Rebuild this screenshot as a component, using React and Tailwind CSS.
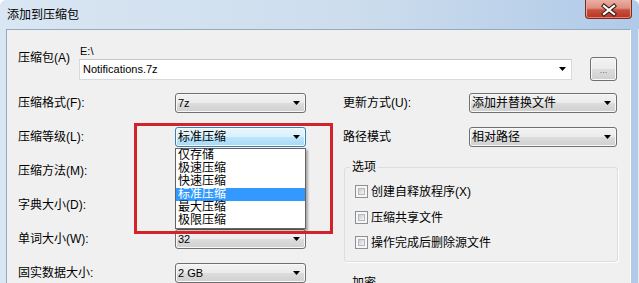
import React from "react";

const Arrow = () => (
  <svg width="7" height="4" viewBox="0 0 7 4" className="shrink-0">
    <path d="M0 0H7L3.5 4Z" fill="#000" />
  </svg>
);

const normalBg =
  "border-[#707070] bg-[linear-gradient(180deg,#f2f2f2_0%,#ebebeb_50%,#dddddd_50%,#cfcfcf_100%)] shadow-[inset_0_0_0_1px_#f8f8f8]";
const focusBg =
  "border-[#3c7fb1] bg-[linear-gradient(180deg,#eaf6fd_0%,#d9f0fc_50%,#bee6fd_50%,#a7d9f5_100%)] shadow-[inset_0_0_0_1px_#f4fbff]";

function Combo({ className, focused, latin, children, extra }) {
  return (
    <div
      className={`relative flex h-[20px] shrink-0 items-center justify-between rounded-[3px] border pl-[2px] pr-[5px] ${
        focused ? focusBg : normalBg
      } ${className}`}
    >
      <span className={latin ? "text-[11px] leading-[14px]" : "leading-[14px]"}>{children}</span>
      <Arrow />
      {extra}
    </div>
  );
}

function Row({ label, children, labelW }) {
  return (
    <div className="flex h-[20px] items-center">
      <div className={`${labelW} shrink-0 leading-[14px]`}>{label}</div>
      {children}
    </div>
  );
}

const Check = () => (
  <div className="h-[13px] w-[13px] shrink-0 border border-[#8e8f8f] bg-[#f6f6f6] p-[2px]">
    <div className="h-full w-full border border-[#b4b9bf] bg-[linear-gradient(135deg,#c9cdd3,#f4f5f6)]" />
  </div>
);

const levels = ["仅存储", "极速压缩", "快速压缩", "标准压缩", "最大压缩", "极限压缩"];

export default function App() {
  return (
    <div className="relative flex h-[283px] w-[639px] flex-col overflow-hidden rounded-t-[6px] bg-[linear-gradient(90deg,#d9e6f3_0%,#cddded_55%,#b0cae8_100%)] font-['Liberation_Sans','Noto_Sans_CJK_SC',sans-serif] text-[12px] text-black">
      {/* title bar */}
      <div className="flex h-[29px] shrink-0 items-start justify-between">
        <div className="pl-[7px] leading-[31px]">添加到压缩包</div>
        <div className="relative mr-[7px] h-[19px] w-[47px] rounded-b-[4px] border border-t-0 border-[#7a2b22] bg-[linear-gradient(180deg,#eab0a3_0%,#dd8f80_45%,#c9503f_55%,#b9341f_100%)] shadow-[inset_0_-1px_0_#e9806d,inset_1px_0_0_#e7a697,inset_-1px_0_0_#e7a697]">
          <svg width="47" height="19" viewBox="0 0 47 19" className="absolute left-[-1px] top-0">
            <path d="M19 6L29 14M29 6L19 14" stroke="#3b1d18" strokeWidth="4.2" strokeLinecap="square" />
            <path d="M19 6L29 14M29 6L19 14" stroke="#ffffff" strokeWidth="2.2" strokeLinecap="square" />
          </svg>
        </div>
      </div>

      <div className="flex min-h-0 flex-1">
        <div className="w-[6px] shrink-0" />
        {/* client area */}
        <div className="relative min-w-0 flex-1 border-l border-r border-t border-l-[#97a9bd] border-r-[#f7f9fb] border-t-[#97a9bd] bg-[#f0f0f0] pl-[11px] pt-[15px]">
          {/* archive row */}
          <div className="flex">
            <div className="mt-[6px] w-[61px] shrink-0 leading-[14px]">压缩包(A)</div>
            <div className="flex flex-col">
              <div className="ml-[1px] h-[12px] text-[11px] leading-[12px]">E:\</div>
              <div className="flex items-center">
                <div className="flex h-[21px] w-[493px] items-center justify-between border border-[#d6dbe1] border-t-[#c4c8ce] bg-white pl-[3px] pr-[5px]">
                  <span className="text-[11px] leading-[14px]">Notifications.7z</span>
                  <Arrow />
                </div>
                <div className={`ml-[18px] flex h-[24px] w-[27px] items-center justify-center rounded-[3px] border pt-[3px] text-[9px] leading-[9px] text-[#6d6d6d] ${normalBg}`}>
                  ...
                </div>
              </div>
            </div>
          </div>

          {/* main two columns */}
          <div className="mt-[12px] flex">
            <div className="flex w-[288px] shrink-0 flex-col gap-[14px]">
              <Row label="压缩格式(F):" labelW="w-[157px]">
                <Combo className="w-[131px]" latin>7z</Combo>
              </Row>
              <Row label="压缩等级(L):" labelW="w-[157px]">
                <Combo
                  className="w-[131px]"
                  focused
                  extra={
                    <div className="absolute left-[-1px] top-[20px] z-10 w-[131px] border border-[#646464] bg-white pb-[1px] shadow-[2px_2px_2px_rgba(0,0,0,0.3)]">
                      {levels.map((t, i) => (
                        <div
                          key={t}
                          className={`h-[13px] pl-[2px] leading-[13px] ${
                            i === 3 ? "bg-[#3399ff] text-white" : "text-black"
                          }`}
                        >
                          {t}
                        </div>
                      ))}
                    </div>
                  }
                >
                  标准压缩
                </Combo>
              </Row>
              <Row label="压缩方法(M):" labelW="w-[157px]">
                <Combo className="w-[131px]" latin></Combo>
              </Row>
              <Row label="字典大小(D):" labelW="w-[157px]">
                <Combo className="w-[131px]" latin></Combo>
              </Row>
              <Row label="单词大小(W):" labelW="w-[157px]">
                <Combo className="w-[131px]" latin>32</Combo>
              </Row>
              <Row label="固实数据大小:" labelW="w-[157px]">
                <Combo className="w-[131px]" latin>2 GB</Combo>
              </Row>
            </div>

            <div className="ml-[37px] flex w-[275px] shrink-0 flex-col">
              <Row label="更新方式(U):" labelW="w-[126px]">
                <Combo className="w-[148px]">添加并替换文件</Combo>
              </Row>
              <div className="mt-[14px]">
                <Row label="路径模式" labelW="w-[126px]">
                  <Combo className="w-[148px]">相对路径</Combo>
                </Row>
              </div>

              <fieldset className="ml-[1px] mt-[13px] w-[274px] rounded-[3px] border border-[#d5dfe5] pb-[12px] pl-[5px] shadow-[1px_1px_0_#ffffff]">
                <legend className="px-[2px] leading-[14px]">选项</legend>
                <div className="ml-[5px] mt-[11px] flex h-[13px] items-center gap-[3px]">
                  <Check />
                  <span className="leading-[14px]">创建自释放程序(X)</span>
                </div>
                <div className="ml-[5px] mt-[13px] flex h-[13px] items-center gap-[3px]">
                  <Check />
                  <span className="leading-[14px]">压缩共享文件</span>
                </div>
                <div className="ml-[5px] mt-[12px] flex h-[13px] items-center gap-[3px]">
                  <Check />
                  <span className="leading-[14px]">操作完成后删除源文件</span>
                </div>
              </fieldset>

              <fieldset className="ml-[1px] mt-[14px] h-[80px] w-[274px] rounded-[3px] border border-[#d5dfe5] pl-[5px]">
                <legend className="px-[2px] leading-[14px]">加密</legend>
              </fieldset>
            </div>
          </div>

          {/* red annotation rectangle */}
          <div className="pointer-events-none absolute left-[127px] top-[93px] z-20 h-[111px] w-[199px] border-[3px] border-[#d2232a]" />
        </div>
        <div className="w-[8px] shrink-0 border-r border-[#e4ecf5]" />
      </div>
    </div>
  );
}
